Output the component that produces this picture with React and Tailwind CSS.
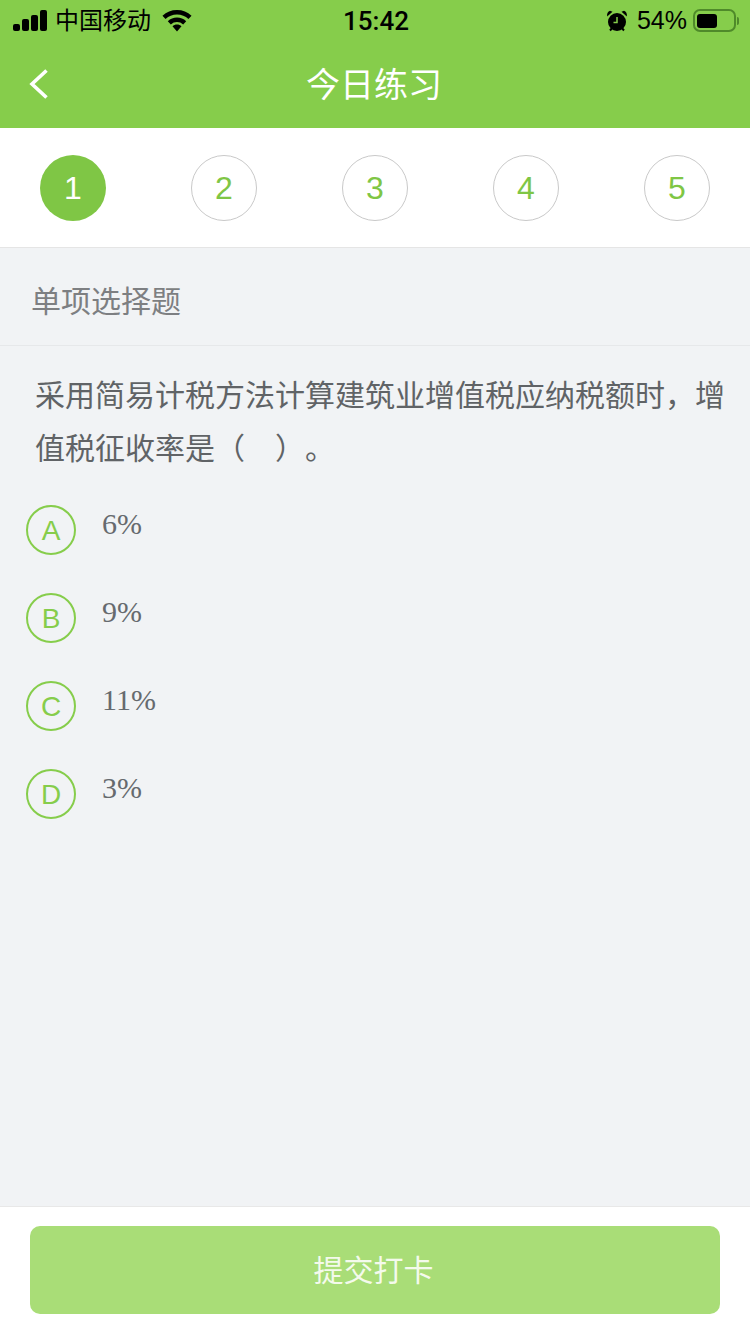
import React from "react";

const sans = "font-['Liberation_Sans','Noto_Sans_CJK_SC',sans-serif]";

const steps = [1, 2, 3, 4, 5];
const options = [
  { key: "A", text: "6%" },
  { key: "B", text: "9%" },
  { key: "C", text: "11%" },
  { key: "D", text: "3%" },
];

const StatusBar = () => (
  <div className="flex h-10 items-center justify-between pl-[13px] pr-[11px] pt-[1px] text-black">
    <div className="flex w-[260px] items-center">
      <svg width="34" height="21" viewBox="0 0 34 21" fill="#000">
        <rect x="0" y="14" width="7" height="7" rx="2" />
        <rect x="9" y="9" width="7" height="12" rx="2" />
        <rect x="18" y="5" width="7" height="16" rx="2" />
        <rect x="27" y="0" width="7" height="21" rx="2" />
      </svg>
      <span className="ml-2 text-[24px] leading-none">中国移动</span>
      <svg className="ml-[11px]" width="30" height="22" viewBox="0 0 30 22" fill="none">
        <path d="M2 7.400C5.400 4.100 10 2.200 15 2.200s9.600 1.900 13 5.200" stroke="#000" strokeWidth="4.400" />
        <path d="M7.300 12.800C9.300 10.900 12 9.700 15 9.700s5.700 1.200 7.700 3.100" stroke="#000" strokeWidth="4.400" />
        <path d="M15 14.600c-1.700 0-3.300.6-4.500 1.700L15 21.500l4.500-5.200c-1.200-1.100-2.800-1.700-4.500-1.700z" fill="#000" />
      </svg>
    </div>
    <div className="font-['Roboto',sans-serif] text-[26px] font-medium leading-none">15:42</div>
    <div className="flex w-[260px] items-center justify-end">
      <svg width="22" height="22" viewBox="0 0 22 22" fill="#000">
        <circle cx="11" cy="12" r="9" />
        <path d="M1.200 6.500 6.500 1.800 4 .7C2 1.200.6 3.800 1.200 6.500zM20.800 6.500 15.500 1.800l2.500-1.100c2 .5 3.400 3.100 2.800 5.800z" />
        <path d="M4 20.500l2.200-2.500M18 20.500 15.800 18" stroke="#000" strokeWidth="2" />
        <path d="M11 7v5.500H7.500" fill="none" stroke="#86cd4b" strokeWidth="1.500" />
      </svg>
      <span className="ml-[9px] text-[25px] leading-none">54%</span>
      <div className="ml-[6px] flex items-center">
        <div className="flex h-[23px] w-[43px] items-center rounded-[7px] border-2 border-[#4f8a2a] p-[2px]">
          <div className="h-[14px] w-[20px] rounded-[3px] bg-black" />
        </div>
        <div className="ml-[1px] h-[8px] w-[2px] rounded-r-sm bg-[#4f8a2a]" />
      </div>
    </div>
  </div>
);

const Header = () => (
  <div className="relative flex h-[88px] items-center justify-center pt-[2px]">
    <svg className="absolute left-[28px] top-[28px]" width="22" height="32" viewBox="0 0 22 32" fill="none">
      <path d="M18.500 2.500 4 16l14.500 13.500" stroke="#fff" strokeWidth="3.600" />
    </svg>
    <span className="pr-[2px] text-[34px] leading-none text-white">今日练习</span>
  </div>
);

const Steps = () => (
  <div className="flex h-[120px] items-center justify-between border-b border-[#e5e5e5] bg-white px-[40px]">
    {steps.map((n) =>
      n === 1 ? (
        <div key={n} className="flex h-[66px] w-[66px] items-center justify-center rounded-full bg-[#7fc645] text-[32px] text-white">
          {n}
        </div>
      ) : (
        <div key={n} className="flex h-[66px] w-[66px] items-center justify-center rounded-full border border-[#c9c9c9] text-[32px] text-[#7fc645]">
          {n}
        </div>
      )
    )}
  </div>
);

const Option = ({ item }) => (
  <div className="flex h-[88px] items-start pl-[26px]">
    <div className="flex h-[50px] w-[50px] shrink-0 items-center justify-center rounded-full border-2 border-[#86cd4b] pt-[2px] text-[28px] leading-none text-[#86cd4b]">
      {item.key}
    </div>
    <span className="ml-[26px] mt-[1px] font-['Liberation_Serif',serif] text-[30px] leading-[36px] text-[#666a6e]">
      {item.text}
    </span>
  </div>
);

export default function App() {
  return (
    <div className={`flex h-[1334px] w-[750px] flex-col overflow-hidden bg-[#f1f3f5] ${sans}`}>
      <div className="bg-[#86cd4b]">
        <StatusBar />
        <Header />
      </div>
      <Steps />
      <div className="flex h-[98px] items-center border-b border-[#e6e8ea] pl-[31px] pt-[10px] text-[30px] text-[#7d7f82]">
        单项选择题
      </div>
      <div className="pl-[35px] pr-[20px] pt-[23px] text-[30px] leading-[53px] text-[#606366] [text-spacing-trim:space-all]">
        采用简易计税方法计算建筑业增值税应纳税额时，增值税征收率是（　）。
      </div>
      <div className="mt-[30px] flex-1">
        {options.map((item) => (
          <Option key={item.key} item={item} />
        ))}
      </div>
      <div className="h-[128px] border-t border-[#e8e8e8] bg-white px-[30px] pt-[19px]">
        <button className="flex h-[88px] w-full items-center justify-center rounded-[10px] bg-[#a9dd77] pr-[3px] text-[30px] text-[#f4faec]">
          提交打卡
        </button>
      </div>
    </div>
  );
}
